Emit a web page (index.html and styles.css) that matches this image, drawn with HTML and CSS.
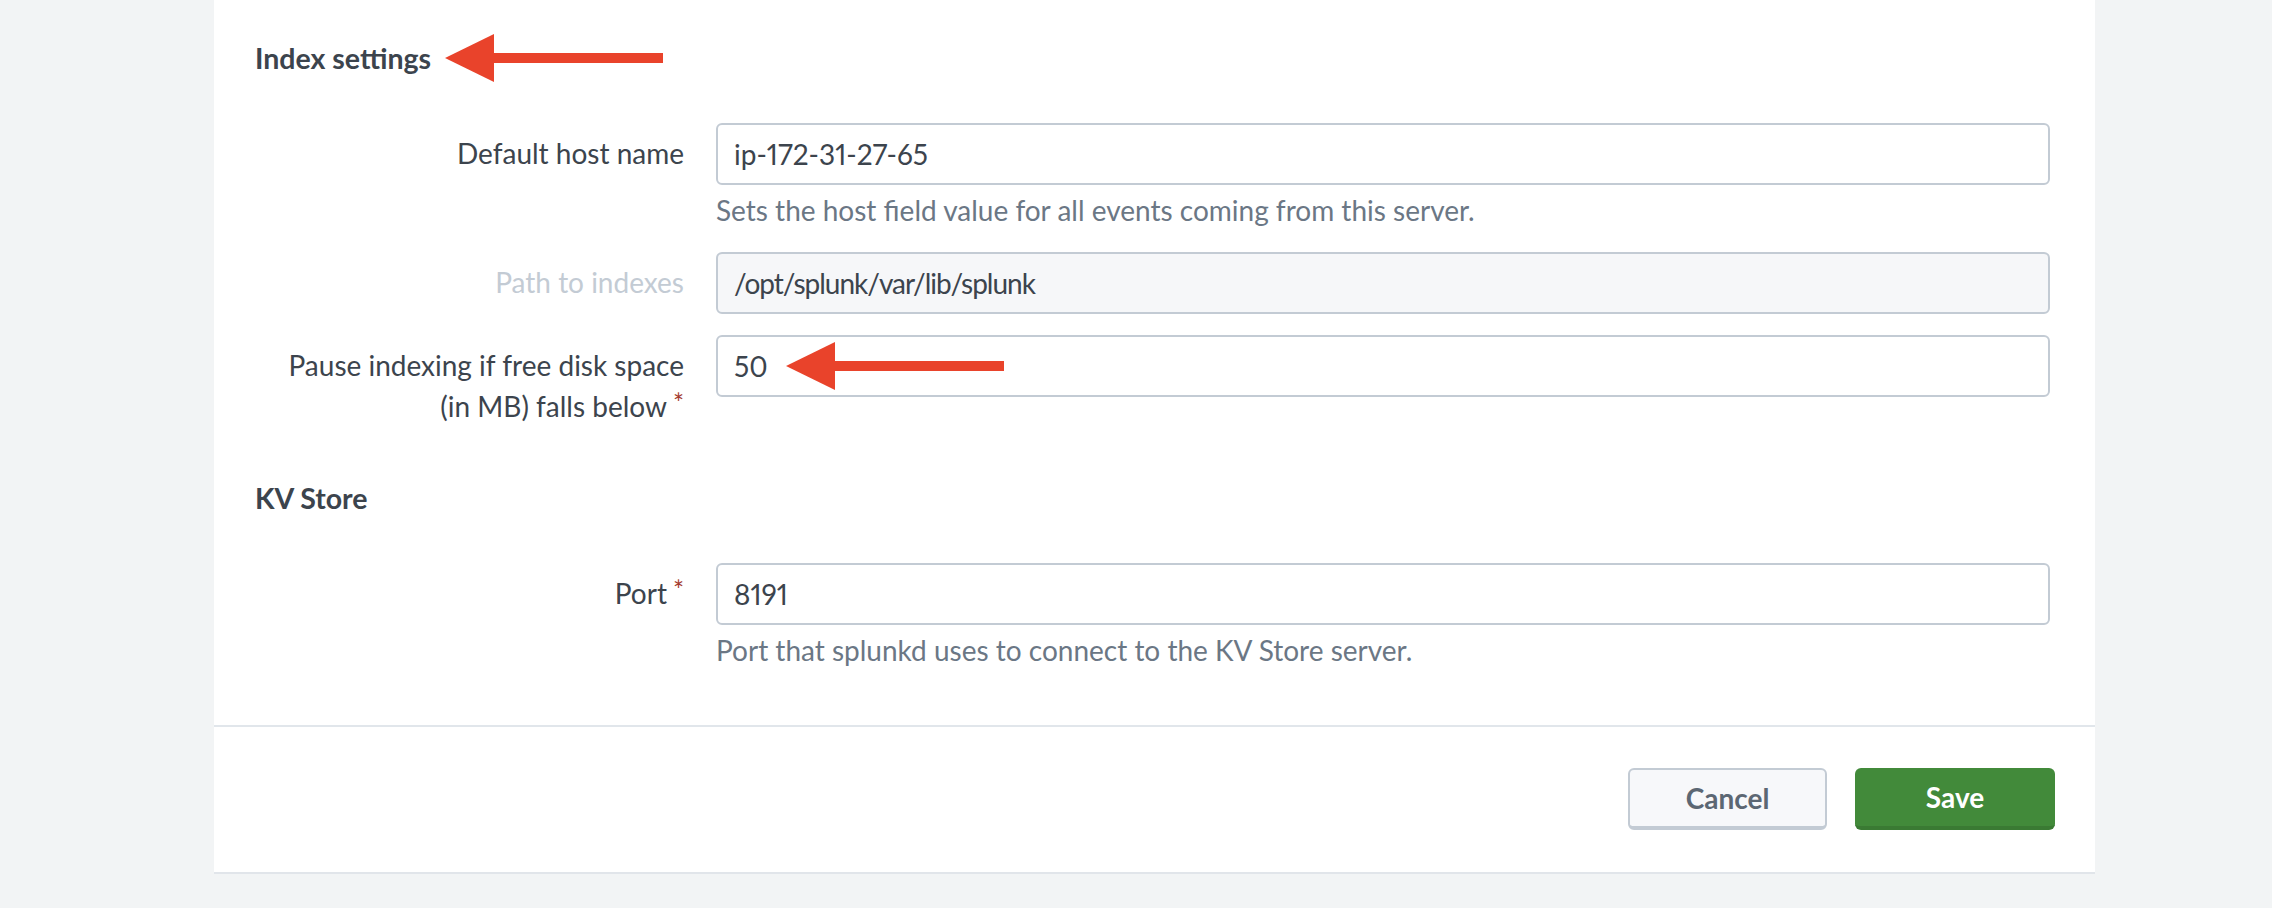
FILE: index.html
```html
<!DOCTYPE html>
<html lang="en">
<head>
<meta charset="utf-8">
<title>Server settings</title>
<link rel="stylesheet" href="styles.css">
</head>
<body>
<div class="page">
  <div class="card">
    <div class="form-body">
      <h2 class="section-title first">
        <span>Index settings</span>
        <svg class="arrow" width="218" height="48" viewBox="0 0 218 48" aria-hidden="true"><polygon points="0,24 49,0 49,48"/><rect x="48" y="19" width="170" height="10"/></svg>
      </h2>

      <div class="row">
        <label class="label">Default host name</label>
        <div class="control">
          <input class="text-input" type="text" value="ip-172-31-27-65">
          <div class="help">Sets the host field value for all events coming from this server.</div>
        </div>
      </div>

      <div class="row">
        <label class="label disabled">Path to indexes</label>
        <div class="control">
          <input class="text-input is-disabled" type="text" value="/opt/splunk/var/lib/splunk" readonly>
        </div>
      </div>

      <div class="row">
        <label class="label">Pause indexing if free disk space<br>(in MB) falls below<span class="req">*</span></label>
        <div class="control">
          <div class="input-wrap">
            <input class="text-input" type="text" value="50">
            <svg class="arrow overlay" width="218" height="48" viewBox="0 0 218 48" aria-hidden="true"><polygon points="0,24 49,0 49,48"/><rect x="48" y="19" width="170" height="10"/></svg>
          </div>
        </div>
      </div>

      <h2 class="section-title second"><span>KV Store</span></h2>

      <div class="row">
        <label class="label">Port<span class="req">*</span></label>
        <div class="control">
          <input class="text-input" type="text" value="8191">
          <div class="help">Port that splunkd uses to connect to the KV Store server.</div>
        </div>
      </div>
    </div>

    <div class="footer">
      <button class="btn btn-cancel" type="button">Cancel</button>
      <button class="btn btn-save" type="button">Save</button>
    </div>
  </div>
</div>
</body>
</html>
```

FILE: styles.css
```css
html, body {
  margin: 0;
  padding: 0;
}

body {
  background: #f2f4f5;
  font-family: "Lato", "Liberation Sans", sans-serif;
  color: #3c444d;
  font-size: 28px;
  font-variant-numeric: proportional-nums;
}

.page {
  padding-left: 214px;
  height: 908px;
  box-sizing: border-box;
}

.card {
  width: 1881px;
  background: #ffffff;
  box-shadow: 0 2px 0 #e1e5ea;
}

.form-body {
  padding: 41px 45px 54px 41px;
}

.section-title {
  margin: 0;
  height: 34px;
  font-size: 28.5px;
  font-weight: 700;
  line-height: 34px;
  color: #3c444d;
  display: flex;
  align-items: center;
  gap: 14px;
}

.section-title.first {
  margin-bottom: 48px;
}

.section-title.second {
  margin-top: 53px;
  margin-bottom: 48px;
}

.arrow {
  display: block;
  fill: #e9432b;
  flex: none;
}

.row {
  display: flex;
  align-items: flex-start;
  gap: 32px;
}

.row + .row {
  margin-top: 21px;
}

.label {
  width: 429px;
  flex: none;
  text-align: right;
  padding-top: 10px;
  line-height: 41px;
  color: #3c444d;
}

.label.disabled {
  color: #c3cbd4;
}

.req {
  color: #a33a2e;
  font-size: 26px;
  position: relative;
  top: -4px;
  margin-left: 6px;
}

.control {
  flex: 1;
  min-width: 0;
}

.input-wrap {
  position: relative;
}

.text-input {
  display: block;
  width: 100%;
  box-sizing: border-box;
  height: 62px;
  margin: 0;
  padding: 0 16px;
  border: 2px solid #c3cbd4;
  border-radius: 6px;
  background: #ffffff;
  font-family: "Lato", "Liberation Sans", sans-serif;
  font-size: 28px;
  font-variant-numeric: proportional-nums;
  color: #3c444d;
  outline: none;
}

.text-input.is-disabled {
  background: #f6f7f9;
  letter-spacing: -1px;
}

.arrow.overlay {
  position: absolute;
  left: 70px;
  top: 7px;
}

.help {
  margin-top: 5px;
  line-height: 41px;
  color: #6b7785;
}

.footer {
  border-top: 2px solid #e1e6eb;
  padding: 41px 40px 42px 0;
  display: flex;
  justify-content: flex-end;
  gap: 28px;
}

.btn {
  box-sizing: border-box;
  height: 62px;
  font-family: "Lato", "Liberation Sans", sans-serif;
  font-size: 28px;
  font-weight: 700;
  border-radius: 6px;
  margin: 0;
  padding: 0;
  cursor: pointer;
}

.btn-cancel {
  width: 199px;
  background: #f7f8fa;
  color: #5c6773;
  border: 2px solid #c3cbd4;
  border-bottom-width: 4px;
}

.btn-save {
  width: 200px;
  background: #428a3a;
  color: #ffffff;
  border: none;
  border-bottom: 4px solid #3a7a33;
}
```
